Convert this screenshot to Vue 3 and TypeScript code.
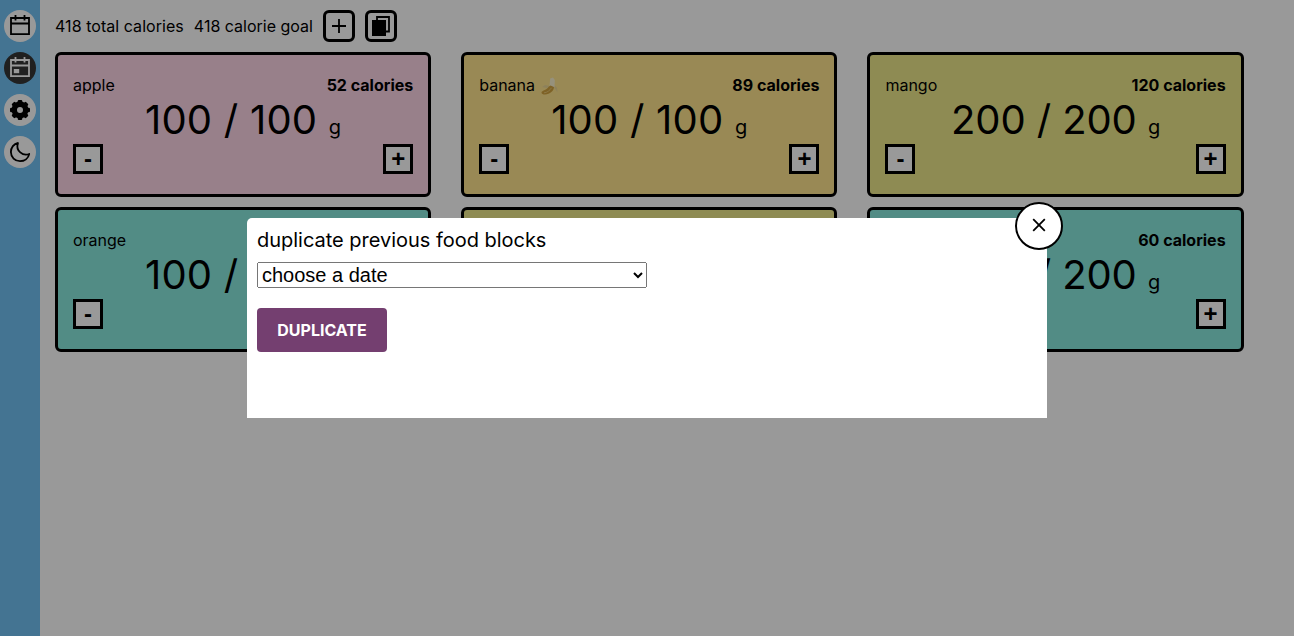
<script setup lang="ts">
import { ref } from 'vue'

interface Food {
  id: number
  name?: string
  fruit?: boolean
  calories?: number
  amount?: number
  tone: string
}

const foods: Food[] = [
  { id: 1, name: 'apple', calories: 52, amount: 100, tone: 'pink' },
  { id: 2, name: 'banana', fruit: true, calories: 89, amount: 100, tone: 'amber' },
  { id: 3, name: 'mango', calories: 120, amount: 200, tone: 'olive' },
  { id: 4, name: 'orange', amount: 100, tone: 'teal' },
  { id: 5, tone: 'olive' },
  { id: 6, calories: 60, amount: 200, tone: 'teal' },
]

const teeth = [0, 45, 90, 135, 180, 225, 270, 315]
const date = ref('')
</script>

<template>
  <div class="app">
    <nav class="sidebar">
      <button class="nav">
        <svg viewBox="0 0 32 32" fill="none" stroke="currentColor" stroke-width="1.8">
          <path d="M7 8h18v16.200H7zM7 13.500h18M11.500 5v5.500M20.500 5v5.500" />
        </svg>
      </button>
      <button class="nav active">
        <svg viewBox="0 0 32 32" fill="none" stroke="currentColor" stroke-width="1.8">
          <path d="M7 8h18v16.200H7zM7 13.500h18M11.500 5v5.500M20.500 5v5.500" />
          <path d="M9.800 17h5.400v4.200H9.800z" fill="currentColor" stroke="none" />
        </svg>
      </button>
      <button class="nav">
        <svg viewBox="0 0 32 32">
          <circle cx="16" cy="16" r="5.700" fill="none" stroke="currentColor" stroke-width="5.400" />
          <rect v-for="angle in teeth" :key="angle" x="13.700" y="6" width="4.600" height="5" rx="1.200" fill="currentColor" :transform="`rotate(${angle} 16 16)`" />
        </svg>
      </button>
      <button class="nav">
        <svg viewBox="0 0 32 32" fill="none" stroke="currentColor">
          <path d="M14 7C9.800 7.700 6.900 11.600 6.900 16C6.900 21.200 11 25.200 16 25.200C20.500 25.200 24.300 22.300 25.200 18C19 20.500 11.300 15 14 7z" stroke-width="1.800" stroke-linejoin="round" />
        </svg>
      </button>
    </nav>

    <main class="main">
      <header class="summary">
        <span class="total">418 total calories</span>
        <span>418 calorie goal</span>
        <button class="tool">
          <svg viewBox="0 0 26 26" fill="none" stroke="currentColor" stroke-width="1.800"><path d="M13 6v14M6 13h14" /></svg>
        </button>
        <button class="tool">
          <svg viewBox="0 0 26 26"><path d="M9 4h12v14.500H9z" fill="none" stroke="currentColor" stroke-width="1.800" /><path d="M4 7h14v16H4z" fill="currentColor" /></svg>
        </button>
      </header>
      <section class="grid">
        <article v-for="food in foods" :key="food.id" class="card" :class="food.tone">
          <div class="row head">
            <span class="name">{{ food.name }}
              <svg v-if="food.fruit" class="banana" viewBox="0 0 17 18">
                <path d="M9 9L4 8 1 10 6 11zM12 7.500l4 3 .5 5-2.500-4-2-1z" fill="#ecd898" />
                <path d="M8.500 9l.7-7.500 2.800-1 1.800 2.500-.2 7-2.500 2z" fill="#fbf2cf" />
                <path d="M9.500 8.500l3.500 1.500c0 3.500-4 7.500-9 7.500-2 0-3.500-.5-3.500-2 0-1.500 3-2 5-3.500 2-1.500 2-2.500 4-3.500z" fill="#d2a440" />
                <path d="M3 15.800c3 0 6-2.500 7.500-5" fill="none" stroke="#ebc976" />
              </svg>
            </span>
            <strong v-if="food.calories">{{ food.calories }} calories</strong>
          </div>
          <div class="amount" :class="{ loose: food.amount === 100 }">
            <template v-if="food.amount">{{ food.amount }} / {{ food.amount }} <span class="unit">g</span></template>
          </div>
          <div v-if="food.amount" class="row">
            <button class="step">-</button>
            <button class="step">+</button>
          </div>
        </article>
      </section>
    </main>

    <div class="overlay">
      <div class="modal">
        <button class="close">
          <svg viewBox="0 0 24 24" fill="none" stroke="currentColor" stroke-width="1.800"><path d="M6.200 6.200l11.600 11.600M17.800 6.200L6.200 17.800" /></svg>
        </button>
        <div class="title">duplicate previous food blocks</div>
        <select v-model="date" class="date">
          <option value="">choose a date</option>
        </select>
        <button class="submit">DUPLICATE</button>
      </div>
    </div>
  </div>
</template>

<style>
body {
  margin: 0;
  overflow: hidden;
}
</style>

<style scoped>
.app {
  display: flex;
  height: 100vh;
  background: #fff;
  color: #000;
  font: 400 16px/20px Inter, "Liberation Sans", sans-serif;
}
.app *, .app {
  box-sizing: border-box;
}
button {
  padding: 0;
  color: #000;
  font-family: inherit;
}
svg {
  display: block;
}
strong {
  font-weight: 700;
}
.sidebar {
  width: 40px;
  flex: none;
  display: flex;
  flex-direction: column;
  align-items: center;
  gap: 10px;
  padding-top: 10px;
  background: #72c1f3;
}
.nav {
  width: 32px;
  height: 32px;
  border: 0;
  border-radius: 50%;
  background: #fff;
}
.nav.active {
  background: #363636;
  color: #fff;
}
.main {
  flex: 1;
  padding: 10px 50.4px 0 15px;
}
.summary {
  display: flex;
  align-items: center;
  gap: 10px;
  height: 32px;
}
.total {
  letter-spacing: 0.05px;
}
.tool {
  width: 32px;
  height: 32px;
  border: 3px solid #000;
  border-radius: 6px;
  background: transparent;
}
.grid {
  display: grid;
  grid-template-columns: repeat(3, 1fr);
  gap: 10px 30px;
  margin-top: 10px;
}
.card {
  height: 145px;
  padding: 20px 15px 0;
  border: 3px solid #000;
  border-radius: 6px;
}
.pink { background: #fdd5e6; }
.amber { background: #ffe48e; }
.olive { background: #ede88a; }
.teal { background: #89e9de; }
.row {
  display: flex;
  justify-content: space-between;
}
.head {
  height: 20px;
}
.name {
  display: flex;
  gap: 6px;
}
.banana {
  width: 17px;
  height: 18px;
  margin-top: 2px;
}
.amount {
  height: 49px;
  font-size: 40px;
  line-height: 49px;
  letter-spacing: -0.1px;
  text-align: center;
  white-space: nowrap;
}
.amount.loose {
  letter-spacing: 0.22px;
}
.unit {
  font-size: 20px;
}
.step {
  width: 30px;
  height: 30px;
  border: 3px solid #000;
  background: #fff;
  font-family: "Liberation Sans", Arial, sans-serif;
  font-size: 24px;
  font-weight: 700;
  line-height: 24px;
}
.overlay {
  position: fixed;
  inset: 0;
  display: flex;
  justify-content: center;
  align-items: center;
  background: rgba(0, 0, 0, 0.4);
}
.modal {
  position: relative;
  width: 800px;
  height: 200px;
  padding: 10px;
  border-radius: 5px 0 0 0;
  background: #fff;
  font-size: 20px;
}
.title {
  height: 24px;
  line-height: 24px;
  letter-spacing: -0.02px;
}
.date {
  display: block;
  width: 390px;
  height: 26px;
  margin: 10px 0 20px;
  font: 20px "Liberation Sans", Arial, sans-serif;
}
.submit {
  display: block;
  width: 130px;
  height: 44px;
  border: 0;
  border-radius: 4px;
  background: #743f70;
  color: #fff;
  font-size: 16px;
  font-weight: 700;
}
.close {
  position: absolute;
  top: -16px;
  right: -16px;
  display: grid;
  place-items: center;
  width: 48px;
  height: 48px;
  padding-bottom: 2px;
  border: 2px solid #000;
  border-radius: 50%;
  background: #fff;
}
.close svg {
  width: 24px;
  height: 24px;
}
</style>
